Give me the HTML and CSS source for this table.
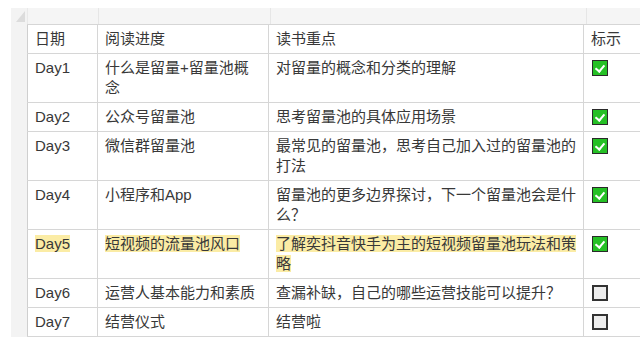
FILE: index.html
```html
<!DOCTYPE html>
<html lang="zh">
<head>
<meta charset="utf-8">
<link rel="stylesheet" href="styles.css">
</head>
<body>
<div class="sheet">
  <div class="corner"><span class="tri"></span></div>
  <div class="colbar">
    <div class="cb c1"></div><div class="cb c2"></div><div class="cb c3"></div><div class="cb c4"></div>
  </div>
  <div class="rowbar"></div>
  <table class="grid">
    <colgroup><col class="w1"><col class="w2"><col class="w3"><col class="w4"></colgroup>
    <tr><td>日期</td><td class="p2">阅读进度</td><td class="p3">读书重点</td><td class="p4">标示</td></tr>
    <tr><td>Day1</td><td class="p2">什么是留量+留量池概念</td><td class="p3">对留量的概念和分类的理解</td><td class="p4"><span class="chk on"></span></td></tr>
    <tr><td>Day2</td><td class="p2">公众号留量池</td><td class="p3">思考留量池的具体应用场景</td><td class="p4"><span class="chk on"></span></td></tr>
    <tr><td>Day3</td><td class="p2">微信群留量池</td><td class="p3">最常见的留量池，思考自己加入过的留量池的打法</td><td class="p4"><span class="chk on"></span></td></tr>
    <tr><td>Day4</td><td class="p2">小程序和App</td><td class="p3">留量池的更多边界探讨，下一个留量池会是什么？</td><td class="p4"><span class="chk on"></span></td></tr>
    <tr><td><span class="hl">Day5</span></td><td class="p2"><span class="hl">短视频的流量池风口</span></td><td class="p3"><span class="hl">了解奕抖音快手为主的短视频留量池玩法和策略</span></td><td class="p4"><span class="chk on"></span></td></tr>
    <tr><td>Day6</td><td class="p2">运营人基本能力和素质</td><td class="p3">查漏补缺，自己的哪些运营技能可以提升？</td><td class="p4"><span class="chk off"></span></td></tr>
    <tr><td>Day7</td><td class="p2">结营仪式</td><td class="p3">结营啦</td><td class="p4"><span class="chk off"></span></td></tr>
  </table>
</div>
</body>
</html>
```

FILE: styles.css
```css
html, body { margin: 0; padding: 0; background: #fff; overflow: hidden; }
body { padding: 8px 0 0 11px; }
.sheet {
  display: grid;
  grid-template-columns: 16px 613px;
  grid-template-rows: 16px auto;
  font-family: "Liberation Sans", "Noto Sans CJK SC", sans-serif;
  font-size: 15px;
  color: #383838;
}
.corner { background: #f3f3f3; position: relative; }
.tri {
  position: absolute; right: 2px; bottom: 2px;
  width: 0; height: 0;
  border-left: 9px solid transparent;
  border-bottom: 11px solid #dcdcdc;
}
.colbar { display: flex; background: #f5f5f5; }
.cb { border-left: 1px solid #e6e6e6; }
.c1 { width: 70px; border-left: 1px solid #e9e9e9; }
.c2 { width: 171px; }
.c3 { width: 315px; }
.c4 { flex: 1; }
.rowbar { background: #f3f3f3; }
.grid {
  border-collapse: collapse;
  table-layout: fixed;
  width: 613px;
}
.w1 { width: 70px; }
.w2 { width: 171px; }
.w3 { width: 315px; }
.w4 { width: 57px; }
.grid td {
  border: 1px solid #d6d6d6;
  padding: 4px 8px 4px 7px;
  line-height: 20px;
  height: 20px;
  vertical-align: top;
  word-break: break-all;
}
.grid td:first-child { border-left-color: #cfcfcf; }
.grid td.p3 { padding-right: 5px; }
.grid td.p4 { border-right: none; padding-right: 0; }
.hl { background: #fbeca5; }
.chk {
  display: inline-block;
  width: 16px; height: 16px;
  box-sizing: border-box;
  vertical-align: -3px;
  margin-left: 1px;
}
.chk.on {
  background: #25c025;
  border: 1px solid #2a2a2a;
  position: relative;
}
.chk.on::after {
  content: "";
  position: absolute;
  left: 4px; top: 2px;
  width: 4px; height: 7px;
  border: solid #fff;
  border-width: 0 2px 2px 0;
  transform: rotate(40deg);
}
.chk.off {
  background: #ededed;
  border: 2px solid #333;
}
```
